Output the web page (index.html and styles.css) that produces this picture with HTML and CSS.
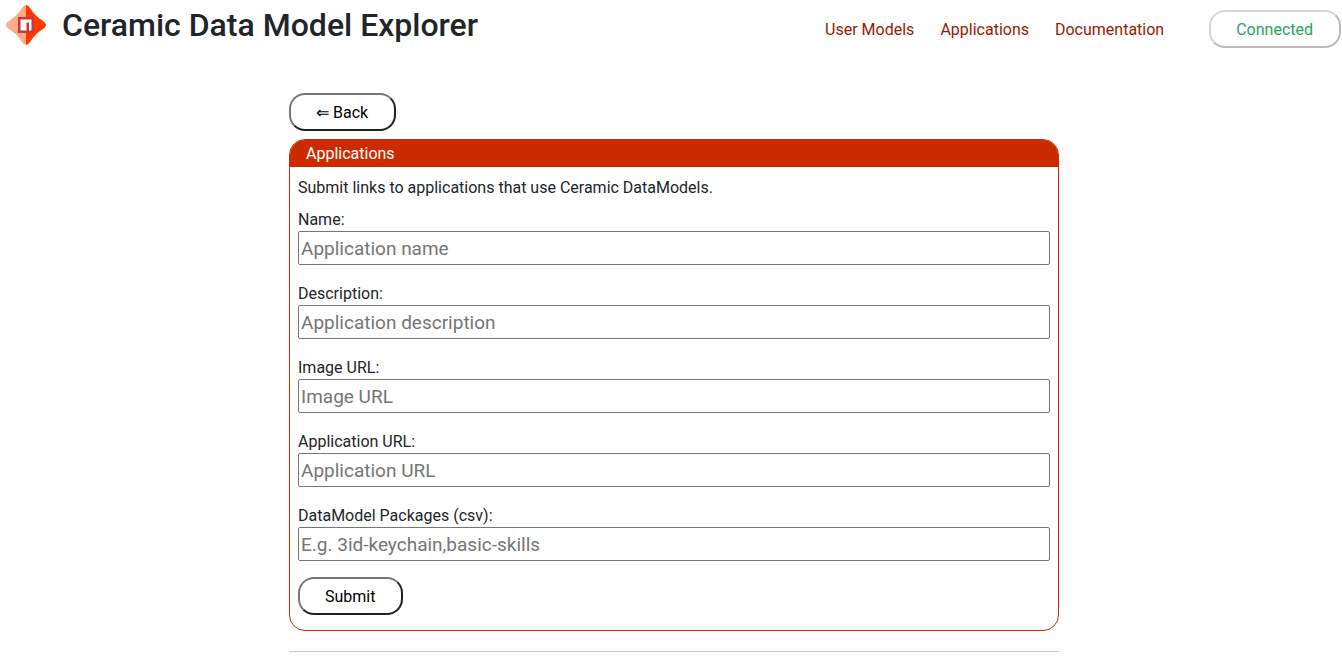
FILE: index.html
```
<!DOCTYPE html>
<html lang="en">
<head>
<meta charset="utf-8">
<meta name="viewport" content="width=device-width, initial-scale=1">
<title>Ceramic Data Model Explorer</title>
<link rel="stylesheet" href="styles.css">
</head>
<body>
<header class="topbar">
  <div class="brand">
    <svg class="logo" viewBox="0 0 40 40" aria-hidden="true">
      <path d="M20 0Q18 0 16 3Q11 11 3 16Q0 18 0 20Q0 22 3 24Q11 29 16 37Q18 40 20 40Z" fill="#ffaa88"/>
      <path d="M20 0Q22 0 24 3Q29 11 37 16Q40 18 40 20Q40 22 37 24Q29 29 24 37Q22 40 20 40Z" fill="#ff3a00"/>
      <path d="M12 12h16v16H12z" fill="#cb3837"/>
      <path d="M14.500 14.500h11v11H23v-8h-2.500v8h-6z" fill="#fff"/>
    </svg>
    <h1 class="title">Ceramic Data Model Explorer</h1>
  </div>
  <nav class="nav">
    <a class="nav-link" href="#models">User Models</a>
    <a class="nav-link" href="#applications">Applications</a>
    <a class="nav-link" href="#docs">Documentation</a>
    <button class="button connected" type="button" disabled>Connected</button>
  </nav>
</header>
<main class="content">
  <button class="button" type="button">⇐ Back</button>
  <section class="panel">
    <h2 class="panel-title">Applications</h2>
    <form class="form">
      <p class="intro">Submit links to applications that use Ceramic DataModels.</p>
      <div class="field">
        <label for="name">Name:</label>
        <input id="name" type="text" placeholder="Application name">
      </div>
      <div class="field">
        <label for="description">Description:</label>
        <input id="description" type="text" placeholder="Application description">
      </div>
      <div class="field">
        <label for="image">Image URL:</label>
        <input id="image" type="text" placeholder="Image URL">
      </div>
      <div class="field">
        <label for="url">Application URL:</label>
        <input id="url" type="text" placeholder="Application URL">
      </div>
      <div class="field">
        <label for="packages">DataModel Packages (csv):</label>
        <input id="packages" type="text" placeholder="E.g. 3id-keychain,basic-skills">
      </div>
      <button class="button submit" type="submit">Submit</button>
    </form>
  </section>
  <hr class="divider">
</main>
</body>
</html>
```
FILE: styles.css
```
* {
  box-sizing: border-box;
}

body {
  margin: 0;
  background: #fff;
  color: #212529;
  font: 16px/24px Roboto, "Liberation Sans", sans-serif;
}

.topbar {
  display: flex;
  justify-content: space-between;
  align-items: flex-start;
  padding: 5px 1px 0 6px;
}

.brand {
  display: flex;
  gap: 16px;
}

.logo {
  width: 40px;
  height: 40px;
}

.title {
  margin: 0;
  font-size: 32px;
  font-weight: 500;
  line-height: 40px;
}

.nav {
  display: flex;
  align-items: center;
  gap: 26px;
  padding-top: 5px;
}

.nav-link {
  padding-top: 2px;
  color: #991b00;
  text-decoration: none;
}

.button {
  padding: 6px 26px 4px 25px;
  border: 2px solid;
  border-color: #767676 #212121 #212121 #767676;
  border-radius: 16px;
  background: #fff;
  color: #000;
  font: inherit;
}

.connected {
  margin-left: 19px;
  border-color: #d6d6d6 #bababa #bababa #d6d6d6;
  color: #27a35f;
}

.content {
  width: 776px;
  max-width: 100%;
  margin: 45px auto 0;
  padding-left: 6px;
}

.panel {
  margin-top: 8px;
  overflow: hidden;
  border: 1px solid #cc2b00;
  border-radius: 16px;
}

.panel-title {
  margin: 0;
  padding: 2px 16px 1px;
  background: #cc2b00;
  color: #fff;
  font-size: 16px;
  font-weight: 400;
  line-height: 24px;
}

.form {
  padding: 9px 8px 15px;
}

.intro {
  margin: 0 0 7px;
}

.field {
  display: flex;
  flex-direction: column;
  margin-bottom: 16px;
}

.field label {
  padding-top: 2px;
  line-height: 22px;
}

.field input {
  width: 100%;
  height: 34px;
  padding: 1px 2px;
  border: 1px solid #767676;
  border-radius: 2px;
  background: #fff;
  color: #212529;
  font: inherit;
  font-size: 19px;
}

.field input::placeholder {
  color: #757575;
}

.submit {
  display: block;
}

.divider {
  height: 1px;
  margin: 20px 0 15px;
  border: 0;
  background: #c8c9ca;
}
```
